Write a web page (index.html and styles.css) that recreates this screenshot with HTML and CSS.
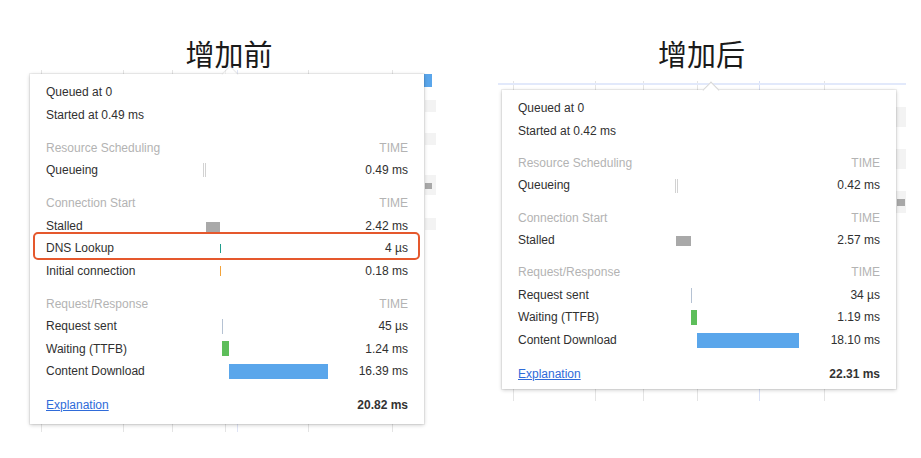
FILE: index.html
```html
<!DOCTYPE html>
<html lang="zh-CN">
<head>
<meta charset="utf-8">
<title>增加前 / 增加后</title>
<link rel="stylesheet" href="styles.css">
</head>
<body>
<div class="compare">
  <section class="fig fig-before">
    <h2 class="fig-title">增加前</h2>
    <div class="shot shot-before">
      <div class="popover popover-before">
        <div class="caret"></div>
        <div class="row plain"><span class="label">Queued at 0</span></div>
        <div class="row plain"><span class="label">Started at 0.49 ms</span></div>

        <div class="row head"><span class="label">Resource Scheduling</span><span class="track"></span><span class="val">TIME</span></div>
        <div class="row"><span class="label">Queueing</span><span class="track"><i class="bar queue" style="margin-left:0px;width:3px"></i></span><span class="val">0.49 ms</span></div>

        <div class="row head"><span class="label">Connection Start</span><span class="track"></span><span class="val">TIME</span></div>
        <div class="row"><span class="label">Stalled</span><span class="track"><i class="bar stalled" style="margin-left:3px;width:14px"></i></span><span class="val">2.42 ms</span></div>
        <div class="row highlight"><span class="label">DNS Lookup</span><span class="track"><i class="bar dns" style="margin-left:17px;width:1px"></i></span><span class="val">4 µs</span></div>
        <div class="row"><span class="label">Initial connection</span><span class="track"><i class="bar connect" style="margin-left:17px;width:1px"></i></span><span class="val">0.18 ms</span></div>

        <div class="row head"><span class="label">Request/Response</span><span class="track"></span><span class="val">TIME</span></div>
        <div class="row"><span class="label">Request sent</span><span class="track"><i class="bar sent" style="margin-left:19px;width:1px"></i></span><span class="val">45 µs</span></div>
        <div class="row"><span class="label">Waiting (TTFB)</span><span class="track"><i class="bar waiting" style="margin-left:19px;width:7px"></i></span><span class="val">1.24 ms</span></div>
        <div class="row"><span class="label">Content Download</span><span class="track"><i class="bar download" style="margin-left:26px;width:99px"></i></span><span class="val">16.39 ms</span></div>

        <div class="row foot"><span class="label"><a href="#" class="link">Explanation</a></span><span class="track"></span><span class="val total">20.82 ms</span></div>
      </div>
    </div>
  </section>

  <section class="fig fig-after">
    <h2 class="fig-title">增加后</h2>
    <div class="shot shot-after">
      <div class="popover popover-after">
        <div class="caret"></div>
        <div class="row plain"><span class="label">Queued at 0</span></div>
        <div class="row plain"><span class="label">Started at 0.42 ms</span></div>

        <div class="row head"><span class="label">Resource Scheduling</span><span class="track"></span><span class="val">TIME</span></div>
        <div class="row"><span class="label">Queueing</span><span class="track"><i class="bar queue" style="margin-left:0px;width:3px"></i></span><span class="val">0.42 ms</span></div>

        <div class="row head"><span class="label">Connection Start</span><span class="track"></span><span class="val">TIME</span></div>
        <div class="row"><span class="label">Stalled</span><span class="track"><i class="bar stalled" style="margin-left:1px;width:15px"></i></span><span class="val">2.57 ms</span></div>

        <div class="row head"><span class="label">Request/Response</span><span class="track"></span><span class="val">TIME</span></div>
        <div class="row"><span class="label">Request sent</span><span class="track"><i class="bar sent" style="margin-left:16px;width:1px"></i></span><span class="val">34 µs</span></div>
        <div class="row"><span class="label">Waiting (TTFB)</span><span class="track"><i class="bar waiting" style="margin-left:16px;width:6px"></i></span><span class="val">1.19 ms</span></div>
        <div class="row"><span class="label">Content Download</span><span class="track"><i class="bar download" style="margin-left:22px;width:102px"></i></span><span class="val">18.10 ms</span></div>

        <div class="row foot"><span class="label"><a href="#" class="link">Explanation</a></span><span class="track"></span><span class="val total">22.31 ms</span></div>
      </div>
    </div>
  </section>
</div>
</body>
</html>
```

FILE: styles.css
```css
html, body {
  margin: 0;
  padding: 0;
  background: #ffffff;
}

body {
  width: 921px;
  height: 458px;
  overflow: hidden;
  font-family: "Liberation Sans", Arial, sans-serif;
  color: #303030;
}

.compare {
  display: flex;
  align-items: flex-start;
  gap: 61px;
  padding-left: 22px;
}

.fig {
  display: flex;
  flex-direction: column;
  align-items: center;
}

.fig-before { width: 414px; }
.fig-after { width: 409px; }

.fig-title {
  margin: 38px 0 0;
  height: 30px;
  font-family: "Noto Sans CJK SC", "Noto Sans", sans-serif;
  font-size: 29px;
  line-height: 30px;
  font-weight: 400;
  color: #1a1a1a;
  letter-spacing: 0;
}

/* screenshot area with the faint network waterfall behind the popover */
.shot {
  align-self: stretch;
  display: flex;
  flex-direction: column;
}

.shot-before {
  margin-top: 2px;
  height: 362px;
  padding: 4px 0 0 8px;
  box-sizing: border-box;
  background:
    linear-gradient(#5aa6eb, #5aa6eb) 402px 4px / 8px 13px no-repeat,
    linear-gradient(#f3f3f3, #f3f3f3) 403px 30px / 11px 12px no-repeat,
    linear-gradient(#f3f3f3, #f3f3f3) 403px 63px / 11px 12px no-repeat,
    linear-gradient(#a8a8a8, #a8a8a8) 403px 113px / 7px 6px no-repeat,
    linear-gradient(#f3f3f3, #f3f3f3) 403px 105px / 11px 20px no-repeat,
    linear-gradient(#f3f3f3, #f3f3f3) 403px 148px / 11px 12px no-repeat,
    linear-gradient(#e4e4e4, #e4e4e4) 19px 0 / 1px 100% no-repeat,
    linear-gradient(#e4e4e4, #e4e4e4) 101px 0 / 1px 100% no-repeat,
    linear-gradient(#e4e4e4, #e4e4e4) 150px 0 / 1px 100% no-repeat,
    linear-gradient(#e4e4e4, #e4e4e4) 203px 0 / 1px 100% no-repeat,
    linear-gradient(#dfe4f6, #dfe4f6) 215px 0 / 1px 100% no-repeat,
    linear-gradient(#e4e4e4, #e4e4e4) 286px 0 / 1px 100% no-repeat,
    linear-gradient(#e4e4e4, #e4e4e4) 370px 0 / 1px 100% no-repeat;
}

.shot-after {
  margin-top: 13px;
  height: 320px;
  padding: 9px 0 0 5px;
  box-sizing: border-box;
  background:
    linear-gradient(#e2e9fb, #e2e9fb) 1px 2px / 408px 2px no-repeat,
    linear-gradient(#f3f3f3, #f3f3f3) 399px 26px / 10px 20px no-repeat,
    linear-gradient(#f3f3f3, #f3f3f3) 399px 68px / 10px 20px no-repeat,
    linear-gradient(#a8a8a8, #a8a8a8) 400px 118px / 8px 7px no-repeat,
    linear-gradient(#f3f3f3, #f3f3f3) 399px 110px / 10px 22px no-repeat,
    linear-gradient(#e4e4e4, #e4e4e4) 16px 0 / 1px 100% no-repeat,
    linear-gradient(#e4e4e4, #e4e4e4) 98px 0 / 1px 100% no-repeat,
    linear-gradient(#e4e4e4, #e4e4e4) 146px 0 / 1px 100% no-repeat,
    linear-gradient(#e4e4e4, #e4e4e4) 200px 0 / 1px 100% no-repeat,
    linear-gradient(#d8e0f6, #d8e0f6) 262px 0 / 1px 100% no-repeat,
    linear-gradient(#e4e4e4, #e4e4e4) 327px 0 / 1px 100% no-repeat;
}

/* the DevTools timing popover */
.popover {
  position: relative;
  width: 394px;
  box-sizing: border-box;
  padding: 7px 16px 7px;
  background: #ffffff;
  font-size: 12px;
  box-shadow: 0 0 0 1px rgba(0, 0, 0, 0.05), 0 1px 4px rgba(0, 0, 0, 0.22);
}

.popover-after {
  padding-bottom: 4px;
}

.caret {
  position: absolute;
  top: -6px;
  width: 11px;
  height: 11px;
  background: #ffffff;
  border-left: 1px solid #d6d6d6;
  border-top: 1px solid #d6d6d6;
  transform: rotate(45deg);
}

.popover-before .caret { left: 194px; opacity: 0.5; }
.popover-after .caret { left: 203px; }

.row {
  position: relative;
  display: grid;
  grid-template-columns: 157px 125px 1fr;
  align-items: center;
  height: 22.5px;
  line-height: 22.5px;
  white-space: nowrap;
}

.row.plain { display: block; }

.row.head {
  margin-top: 10.5px;
  color: #b3b3b3;
}

.popover-after .row.head {
  margin-top: 9.8px;
}

.row.foot {
  margin-top: 11.5px;
}

.label { overflow: visible; }

.val {
  text-align: right;
}

.total {
  font-weight: 700;
  color: #333333;
}

.link {
  color: #2f6bd9;
  text-decoration: underline;
}

.track {
  display: flex;
  align-items: center;
  height: 22.5px;
}

.bar {
  display: block;
  flex: none;
  height: 15px;
}

.bar.queue {
  box-sizing: border-box;
  height: 14px;
  border-left: 1px solid #d2d2d2;
  border-right: 1px solid #d2d2d2;
  background: #ffffff;
}

.bar.stalled {
  height: 10px;
  margin-top: 2px;
  background: #a9a9a9;
}

.popover-after .bar.stalled {
  margin-left: 2px;
}

.bar.dns {
  height: 9px;
  background: #1f9d8c;
}

.bar.connect {
  height: 10px;
  background: #f3a33a;
}

.bar.sent {
  height: 15px;
  background: #b5c2d3;
}

.bar.waiting {
  background: #5dbe5a;
}

.bar.download {
  background: #5aa6eb;
}

/* annotation around the DNS Lookup row */
.row.highlight::after {
  content: "";
  position: absolute;
  left: -13px;
  right: -12px;
  top: -5px;
  bottom: 0;
  border: 2px solid #e5582d;
  border-radius: 5px;
  pointer-events: none;
}
```
